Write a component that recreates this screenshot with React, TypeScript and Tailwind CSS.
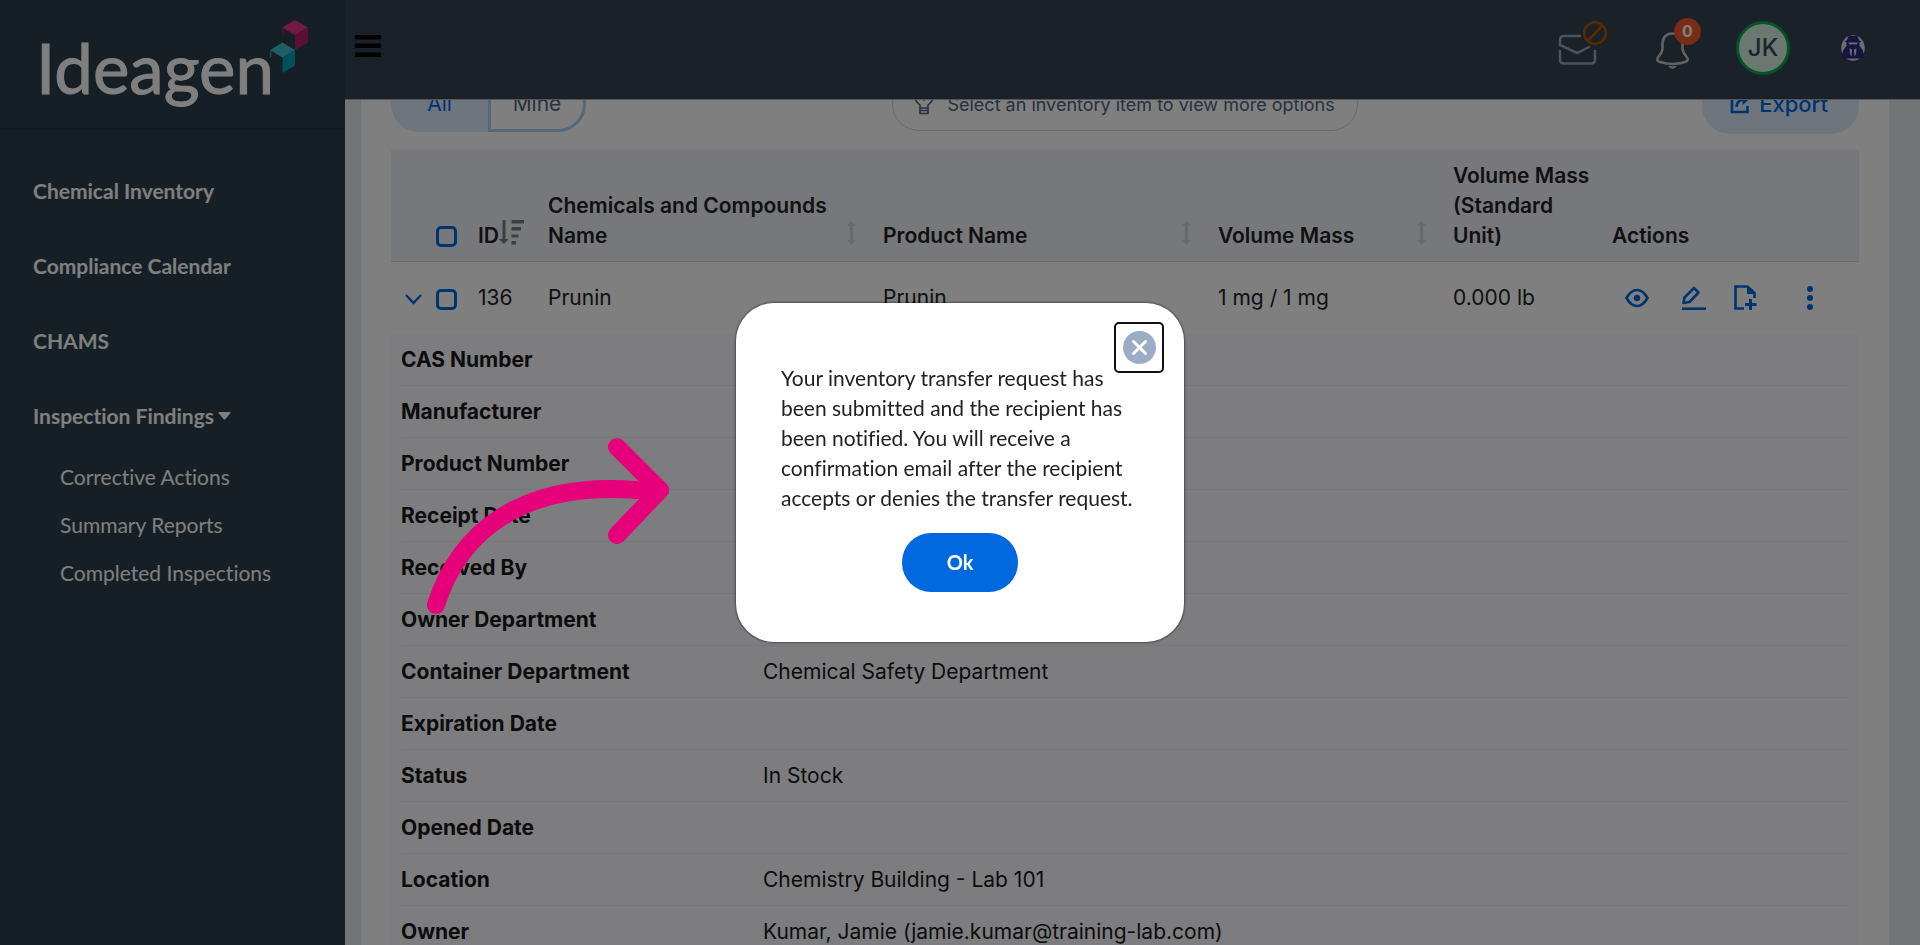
import React, { useState } from 'react';

interface DetailRow {
  label: string;
  value?: string;
}

const navItems = ['Chemical Inventory', 'Compliance Calendar', 'CHAMS'];
const inspectionItems = ['Corrective Actions', 'Summary Reports', 'Completed Inspections'];

const details: DetailRow[] = [
  { label: 'CAS Number' },
  { label: 'Manufacturer' },
  { label: 'Product Number' },
  { label: 'Receipt Date' },
  { label: 'Received By' },
  { label: 'Owner Department' },
  { label: 'Container Department', value: 'Chemical Safety Department' },
  { label: 'Expiration Date' },
  { label: 'Status', value: 'In Stock' },
  { label: 'Opened Date' },
  { label: 'Location', value: 'Chemistry Building - Lab 101' },
  { label: 'Owner', value: 'Kumar, Jamie (jamie.kumar@training-lab.com)' },
];

const Logo: React.FC = () => (
  <svg className="w-[280px] h-[108px]" viewBox="0 0 280 108" role="img" aria-label="Ideagen">
    <text x="2" y="76" fontSize="69" fill="#fff" stroke="#fff" strokeWidth="1" fontFamily="Lato, sans-serif">Ideagen</text>
    <path d="M248 9.500L261 2L274 9.500L261 17Z" fill="#e0348a" />
    <path d="M261 17L274 9.500V24.500L261 32Z" fill="#b4206a" />
    <path d="M248 9.500L250 11V15.500L248 17Z" fill="#8a2058" />
    <path d="M236 32L248.500 24.500L261 32L248.500 39.500Z" fill="#3cbecb" />
    <path d="M248.500 39.500L261 32V47.500L248.500 55Z" fill="#00a0b8" />
    <path d="M236 32L237.500 33V38.500L236 40Z" fill="#2a98a6" />
  </svg>
);

const SortIcon: React.FC = () => (
  <svg className="w-[9px] h-6 mb-1.5 shrink-0" viewBox="0 0 9 24" fill="#d3d4d9">
    <path d="M4.500 0L9 5H6.200V19H9L4.500 24L0 19H2.800V5H0Z" />
  </svg>
);

const SortDescIcon: React.FC = () => (
  <svg className="w-[26px] h-[26px] mb-1.5 shrink-0" viewBox="0 0 26 26" fill="#7c7c80">
    <path d="M3.500 1H6.500V20H9.500L5 25L0 20H3.500Z" />
    <path d="M12.500 1H25V4.500H12.500ZM12.500 8H22V11.500H12.500ZM12.500 15.500H19.500V18.500H12.500ZM12.500 22H17V25.500H12.500Z" />
  </svg>
);

const Checkbox: React.FC<{ label: string }> = ({ label }) => (
  <input
    type="checkbox"
    aria-label={label}
    className="appearance-none w-[21px] h-[21px] rounded-[5px] border-3 border-[#0069e0] shrink-0"
  />
);

const Sidebar: React.FC = () => (
  <aside className="w-[345px] shrink-0 bg-[#2c3e4a] text-white font-[Lato,sans-serif] [font-variant-ligatures:no-common-ligatures] text-[21px] leading-[30px]">
    <div className="h-[130px] border-b-2 border-[#26353f] pl-[34px] pt-[18px]">
      <Logo />
    </div>
    <nav className="pt-[23px]">
      <ul>
        {navItems.map((item) => (
          <li key={item}>
            <a href="#" className="flex items-center h-[75px] pl-[33px] font-bold">{item}</a>
          </li>
        ))}
        <li>
          <a href="#" className="flex items-center gap-1 h-[75px] pl-[33px] font-bold">
            Inspection Findings
            <svg className="w-[13px] h-2" viewBox="0 0 13 8" fill="currentColor">
              <path d="M1 0H12Q13 0 12.500 1L7.500 7Q6.500 8 5.500 7L.5 1Q0 0 1 0Z" />
            </svg>
          </a>
          <ul>
            {inspectionItems.map((item) => (
              <li key={item}>
                <a href="#" className="flex items-center h-12 pl-[60px]">{item}</a>
              </li>
            ))}
          </ul>
        </li>
      </ul>
    </nav>
  </aside>
);

const Header: React.FC = () => (
  <header className="flex items-center justify-between h-[100px] shrink-0 bg-[#344252] border-b border-[#a8abb2] pl-[10px] pr-[55px] pb-[3px]">
    <button aria-label="Toggle menu" className="mb-1">
      <svg className="w-[26px] h-[22px]" viewBox="0 0 26 22" fill="#000">
        <path d="M0 0H26V4.500H0ZM0 8.500H26V13H0ZM0 17.500H26V22H0Z" />
      </svg>
    </button>
    <div className="flex items-center">
      <button aria-label="Messages" className="mr-[47px]">
        <svg className="w-[50px] h-[56px]" viewBox="0 0 50 56" fill="none">
          <path d="M23 16H6Q2 16 2 20V25L19 33L32 26.500M2 30V40Q2 43.500 6 43.500H33Q37 43.500 37 40V30" stroke="#9aa5bb" strokeWidth="2.500" />
          <circle cx="37" cy="13" r="10.800" stroke="#b05208" strokeWidth="2.600" />
          <path d="M30 20.500L44.500 5.500" stroke="#b05208" strokeWidth="2.600" />
        </svg>
      </button>
      <button aria-label="Notifications" className="relative mr-[35px]">
        <svg className="w-[46px] h-[56px]" viewBox="0 0 46 56" fill="none">
          <path d="M17.500 13.500Q8 13.500 7.500 24V29Q7 33 4 36Q0 40.500 5 42Q17.500 46 30 42Q35 40.500 31 36Q28 33 27.500 29V24Q27 13.500 17.500 13.500Z" stroke="#c4c4c4" strokeWidth="2.600" />
          <path d="M13 46Q17.500 52 22 46Z" fill="#c4c4c4" />
        </svg>
        <span className="absolute right-0 -top-0.5 w-[27px] h-[27px] rounded-full bg-[#f2592a] text-white font-[Inter,sans-serif] text-[16px] leading-[27px] font-bold">0</span>
      </button>
      <button className="w-[54px] h-[54px] mr-[51px] rounded-full border-3 border-[#00a84a] bg-[#d6efe0] text-[#3c4856] font-[Inter,sans-serif] text-[24px] font-medium">JK</button>
      <button aria-label="Account">
        <svg className="w-6 h-[26px]" viewBox="0 0 24 26">
          <ellipse cx="12" cy="13" rx="11.800" ry="12.800" fill="#d8d8e4" />
          <path d="M7 2Q9 0 12 1Q15 0 17 2L18 5L20.500 7H3.500L6 5ZM5.500 7H18.500V11Q22 14 23 20L22 23.500H2L1 20Q2 14 5.500 11Z" fill="#2c2884" />
          <path d="M7 7.500H17L15.500 9.500H13L12 9L11 9.500H8.500ZM8.500 13.500L11 14.500L10.500 21.500L9 19ZM15.500 13.500L13 14.500L13.500 21.500L15 19Z" fill="#d8d8e4" />
        </svg>
      </button>
    </div>
  </header>
);

const Toolbar: React.FC = () => (
  <div className="flex items-center justify-between h-[60px] -mt-[26px] mb-4">
    <div className="flex h-14 text-[21px]">
      <button className="w-[97px] rounded-l-[28px] bg-[#dcebfb] text-[#0069e0]">All</button>
      <button className="w-[98px] rounded-r-[28px] border-3 border-[#adceef] text-[#54607a]">Mine</button>
    </div>
    <div className="flex items-center h-[54px] mr-[38px] rounded-full border border-[#d0d3dc] pl-5 pr-[22px] text-[18px] text-[#54607a]">
      <svg className="w-[22px] h-[28px] mr-3" viewBox="0 0 22 28" fill="none" stroke="currentColor" strokeWidth="1.600">
        <path d="M7 18V15Q2 11 2 8A9 8 0 0 1 20 8Q20 11 15 15V18ZM7 18V23.500H15V18M7 20.500H15M7.500 7L11 10L14.500 7" />
      </svg>
      Select an inventory item to view more options
    </div>
    <button className="flex items-center h-[60px] rounded-[28px] bg-[#dcebfb] pl-7 pr-[31px] text-[22px] font-medium text-[#0069e0]">
      <svg className="w-5 h-5 mr-[9px]" viewBox="0 0 20 20" fill="none" stroke="currentColor" strokeWidth="2.600">
        <path d="M7 3H2V18H17.500V12M6.500 13Q7 6 14 5.500" />
        <path d="M12.500 0L19 5.500L12.500 11Z" fill="currentColor" stroke="none" />
      </svg>
      Export
    </button>
  </div>
);

const RowActions: React.FC = () => (
  <div className="flex items-center pl-[23px] text-[#0069e0]">
    <button aria-label="View" className="mr-[33px]">
      <svg className="w-6 h-6" viewBox="0 0 24 24" fill="none" stroke="currentColor" strokeWidth="2.600">
        <path d="M1.500 12Q6 4 12 4T22.500 12Q18 20 12 20T1.500 12Z" />
        <circle cx="12" cy="12" r="3.200" fill="currentColor" stroke="none" />
      </svg>
    </button>
    <button aria-label="Edit" className="mr-7">
      <svg className="w-6 h-6" viewBox="0 0 24 24" fill="none" stroke="currentColor" strokeWidth="2.600">
        <path d="M1.500 17L2.500 11.500L12 2L16.500 6.500L7.500 16Z" strokeLinejoin="round" />
        <path d="M0 22.700H24" />
      </svg>
    </button>
    <button aria-label="Add document" className="mr-[41px]">
      <svg className="w-[23px] h-[25px]" viewBox="0 0 23 25" fill="none" stroke="currentColor" strokeWidth="2.600">
        <path d="M10 23.500H1.500V1.500H13.500L20.500 8V13" />
        <path d="M13 1V9H21Z" fill="currentColor" stroke="none" />
        <path d="M16.500 14V25M11 19.500H22.500" strokeWidth="3" />
      </svg>
    </button>
    <button aria-label="More actions">
      <svg className="w-6 h-6" viewBox="0 0 24 24" fill="currentColor">
        <circle cx="12" cy="3" r="3" />
        <circle cx="12" cy="12" r="3" />
        <circle cx="12" cy="21" r="3" />
      </svg>
    </button>
  </div>
);

const InventoryTable: React.FC = () => (
  <table className="w-full table-fixed text-left text-[21px] leading-[30px] text-[#222]">
    <colgroup>
      <col className="w-[77px]" />
      <col className="w-[70px]" />
      <col />
      <col />
      <col className="w-[235px]" />
      <col className="w-[159px]" />
      <col className="w-[257px]" />
    </colgroup>
    <thead>
      <tr className="bg-[#eff1f6] border-b border-[#d8d9de] align-bottom">
        <th className="pl-[45px] pb-[14px]">
          <div className="flex"><Checkbox label="Select all" /></div>
        </th>
        <th className="pl-[10px] pt-[11px] pb-[10px] font-semibold">
          <div className="flex items-end">ID<SortDescIcon /></div>
        </th>
        <th className="pl-[10px] pr-[17px] pt-[11px] pb-[10px] font-semibold">
          <div className="flex items-end justify-between">Chemicals and Compounds Name<SortIcon /></div>
        </th>
        <th className="pl-[10px] pr-[17px] pt-[11px] pb-[10px] font-semibold">
          <div className="flex items-end justify-between">Product Name<SortIcon /></div>
        </th>
        <th className="pl-[10px] pr-[17px] pt-[11px] pb-[10px] font-semibold">
          <div className="flex items-end justify-between">Volume Mass<SortIcon /></div>
        </th>
        <th className="px-[10px] pt-[11px] pb-[10px] font-semibold">Volume Mass (Standard Unit)</th>
        <th className="pl-[10px] pt-[11px] pb-[10px] font-semibold">Actions</th>
      </tr>
    </thead>
    <tbody>
      <tr className="h-[72px]">
        <td className="pl-[14px]">
          <div className="flex items-center gap-[14px] pt-1">
            <button aria-label="Collapse row">
              <svg className="w-[17px] h-[11px]" viewBox="0 0 17 11" fill="none" stroke="#0069e0" strokeWidth="2.300">
                <path d="M1 1L8.500 9L16 1" />
              </svg>
            </button>
            <Checkbox label="Select Prunin" />
          </div>
        </td>
        <td className="pl-[10px]">136</td>
        <td className="pl-[10px]">Prunin</td>
        <td className="pl-[10px]">Prunin</td>
        <td className="pl-[10px]">1 mg / 1 mg</td>
        <td className="pl-[10px]">0.000 lb</td>
        <td><RowActions /></td>
      </tr>
      <tr>
        <td colSpan={7} className="bg-[#fafaff] px-[10px] text-[#181818]">
          <dl>
            {details.map((row) => (
              <div key={row.label} className="flex items-center h-[52px] pt-0.5 border-b border-[#ebecf1]">
                <dt className="w-1/4 font-bold">{row.label}</dt>
                <dd>{row.value}</dd>
              </div>
            ))}
          </dl>
        </td>
      </tr>
    </tbody>
  </table>
);

const TransferDialog: React.FC<{ onClose: () => void }> = ({ onClose }) => (
  <div className="fixed inset-0 flex items-center justify-center bg-black/50">
    <div role="dialog" aria-modal="true" className="relative w-[448px] rounded-[38px] bg-white px-[45px] pt-[60px] pb-[50px] shadow-[0_0_2px_1px_rgba(0,0,0,0.4)] font-[Lato,sans-serif] [font-variant-ligatures:no-common-ligatures] text-[21px] leading-[30px] text-[#222]">
      <button
        onClick={onClose}
        aria-label="Close"
        className="absolute right-5 top-[19px] flex items-center justify-center w-[50px] h-[51px] rounded-[5px] border-2 border-[#111]"
      >
        <svg className="w-[33px] h-[33px]" viewBox="0 0 33 33">
          <circle cx="16.500" cy="16.500" r="16.500" fill="#9bacc4" />
          <path d="M10.500 10.500L22.500 22.500M22.500 10.500L10.500 22.500" stroke="#fff" strokeWidth="3" strokeLinecap="round" />
        </svg>
      </button>
      <p>
        Your inventory transfer request has been submitted and the recipient has been notified. You will receive a
        confirmation email after the recipient accepts or denies the transfer request.
      </p>
      <button
        onClick={onClose}
        className="block w-[116px] h-[59px] mx-auto mt-5 pb-0.5 rounded-[29px] bg-[#0069e0] font-bold text-white text-[20px]"
      >
        Ok
      </button>
      {/* pointer to the confirmation message */}
      <svg
        className="absolute right-full top-[134px] mr-[65px] w-[246px] h-[180px] pointer-events-none"
        viewBox="425 437 246 180"
        fill="none"
        stroke="#e6007a"
        strokeWidth="18"
        strokeLinecap="round"
        strokeLinejoin="round"
      >
        <path d="M436 605C459 532 522 481 636 490L660 490" />
        <path d="M617 447L660 490L617 535" />
      </svg>
    </div>
  </div>
);

const App: React.FC = () => {
  const [showDialog, setShowDialog] = useState(true);

  return (
    <div className="flex h-screen overflow-hidden font-[Inter,sans-serif]">
      <Sidebar />
      <div className="flex flex-col flex-1 min-w-0">
        <Header />
        <main className="flex-1 min-h-0 overflow-hidden bg-[#e6e8ec] pl-4 pr-[31px]">
          <div className="bg-white px-[30px]">
            <Toolbar />
            <InventoryTable />
          </div>
        </main>
      </div>
      {showDialog && <TransferDialog onClose={() => setShowDialog(false)} />}
    </div>
  );
};

export default App;
